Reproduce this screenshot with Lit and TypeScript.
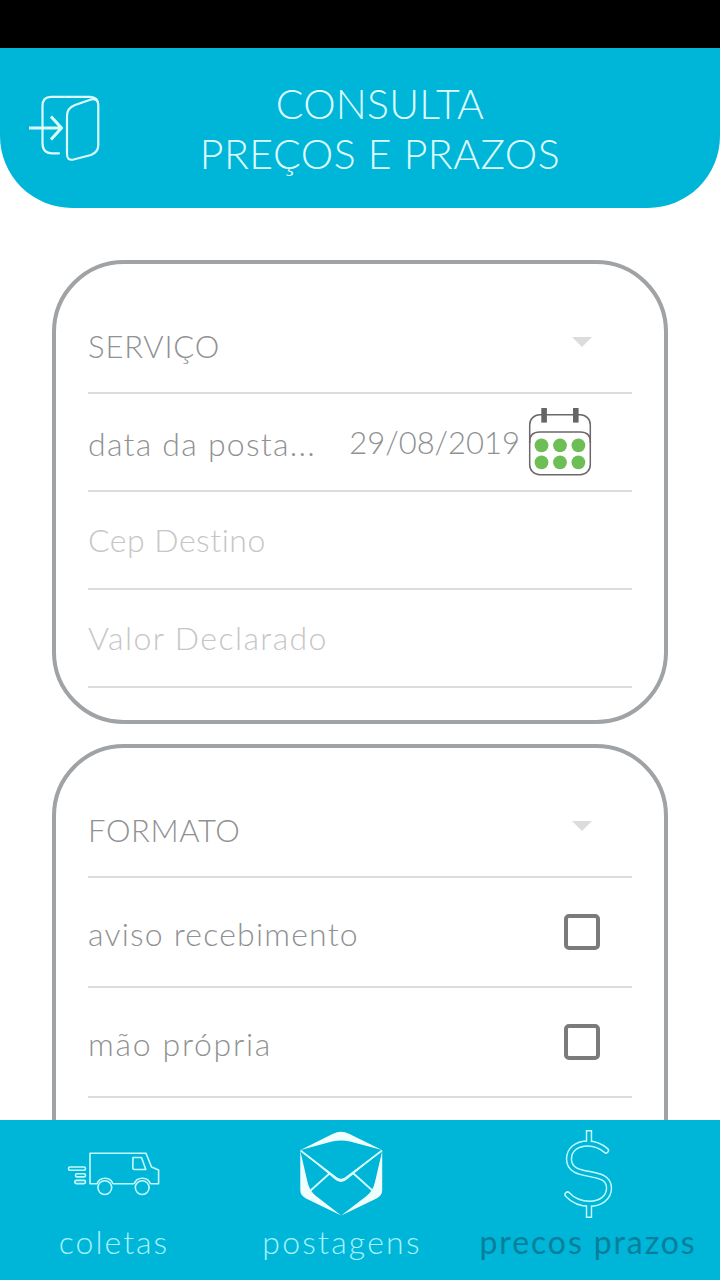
import { LitElement, html, css, svg } from "lit";
import { customElement } from "lit/decorators.js";

const exitIcon = svg`<svg class="exit" width="76" height="72" viewBox="26 92 76 72" fill="none" stroke="#dcfbff" stroke-width="2.2" stroke-linecap="round" stroke-linejoin="round">
  <path d="M59 153.300H52Q42.500 153.300 42.500 143V106Q42.500 96.800 51 96.800H90Q98.300 97 98.300 105V145Q98.300 152 91 155L73.500 159.500Q67 161 67 154V116Q67 108 75 105L91 99.500Q96.500 98 98 103"/>
  <path stroke-width="3" stroke-linecap="butt" d="M29 128H61M51 116.500L61.500 128L51 139.500"/></svg>`;

const calendarIcon = svg`<svg class="calendar" width="64" height="70" viewBox="528 407 64 70">
  <g fill="none" stroke="#6d666b" stroke-width="1.500">
    <rect x="529.700" y="414.700" width="60.600" height="60" rx="10"/>
    <path d="M529.700 443V441.500Q529.700 432 539.700 432H580.300Q590.300 432 590.300 441.500V443"/></g>
  <g fill="#666"><rect x="541.300" y="408" width="5.600" height="14.600"/><rect x="573" y="408" width="5.600" height="14.600"/></g>
  <g fill="#6dbe55"><circle cx="541.500" cy="445.300" r="6.900"/><circle cx="560" cy="445.300" r="6.900"/><circle cx="578.400" cy="445.300" r="6.900"/><circle cx="541.500" cy="462.300" r="6.900"/><circle cx="560" cy="462.300" r="6.900"/><circle cx="578.400" cy="462.300" r="6.900"/></g></svg>`;

const arrow = svg`<svg class="arrow" width="20" height="10" viewBox="0 0 20 10"><path d="M0 0H20L10 10Z" fill="#dcdcdc"/></svg>`;

const vanIcon = svg`<svg width="94" height="92" viewBox="67 1128 94 92" fill="none" stroke="#c4fbff" stroke-width="1.600" stroke-linejoin="round">
  <path d="M97 1183.700H90V1153.300H146L151.500 1167L158.600 1170V1183.700H150.500M134 1183.700H113"/>
  <path d="M133 1157.500H141.500L145.800 1169.500H134.500Q132.800 1169.500 132.800 1167.500Z"/>
  <circle cx="104.800" cy="1187.600" r="6.900"/><circle cx="142.200" cy="1187.600" r="6.900"/>
  <path d="M97 1184Q99 1178.200 105 1178.200T113 1184M134.200 1184Q136 1178.200 142.300 1178.200T150.500 1184"/>
  <rect x="68.500" y="1167" width="17" height="3.200" rx="1.500"/><rect x="75.500" y="1173.700" width="10" height="3.200" rx="1.500"/><rect x="74.800" y="1180.400" width="10.700" height="3.200" rx="1.500"/></svg>`;

const envelopeIcon = svg`<svg width="84" height="92" viewBox="300 1128 84 92" fill="#f0feff">
  <path d="M300.500 1150L333 1133.700Q341 1129.800 349 1133.700L382 1150L350 1141.500Q341 1139.300 332 1141.500Z"/>
  <path d="M300.300 1151L307.500 1182Q309.500 1191 316 1196L341.200 1215.500L306 1198.500Q300.300 1195.500 300.300 1190Z"/>
  <path d="M382.200 1151L375 1182Q373 1191 366.500 1196L341.200 1215.500L376.500 1198.500Q382.200 1195.500 382.200 1190Z"/>
  <path d="M300.300 1150L335 1176Q341 1182 347 1176L382.200 1150L347.500 1179Q341 1185 334.500 1179Z"/>
  <path d="M300.500 1150.500L336 1178Q341 1182 346 1178L382 1150.500M329.500 1173.500L309.500 1191.500M353.500 1173.500L373.500 1191.500" fill="none" stroke="#d8fcff" stroke-width="1.700"/></svg>`;

const dollarIcon = svg`<svg width="52" height="92" viewBox="562 1128 52 92" fill="none" stroke-linecap="round">
  <g stroke="#c4fbff" stroke-width="6.400"><path d="M589 1130V1144M589 1204V1218" stroke-linecap="butt"/>
  <path d="M606 1150.500C600 1145.500 594 1143.500 588 1143.500C576 1143.500 569 1150 569 1159C569 1181 609 1167 609 1188C609 1198 600 1203.800 590 1203.800C580 1203.800 573 1200.500 567.500 1194.500"/></g>
  <path stroke="#00b6d8" stroke-width="3.500" stroke-linecap="butt" d="M589 1131.400V1144M589 1204V1216.600"/>
  <path stroke="#00b6d8" stroke-width="3.500" d="M606 1150.500C600 1145.500 594 1143.500 588 1143.500C576 1143.500 569 1150 569 1159C569 1181 609 1167 609 1188C609 1198 600 1203.800 590 1203.800C580 1203.800 573 1200.500 567.500 1194.500"/></svg>`;

@customElement("app-root")
class AppRoot extends LitElement {
  static styles = css`
    :host { display: flex; flex-direction: column; height: 1280px; width: 720px; overflow: hidden; background: #fff;
      font-family: Lato, "Noto Sans", sans-serif; font-weight: 300; font-size: 32px; color: #8f9193; }
    * { box-sizing: border-box; }
    svg { display: block; flex: none; }
    span, h1 { white-space: nowrap; }
    .status { height: 48px; flex: none; background: #000; }
    header { height: 160px; flex: none; background: #00b6d8; border-radius: 0 0 72px 72px; display: flex; padding-left: 26px; color: #dffcff; }
    .exit { margin-top: 44px; }
    h1 { margin: 31px 0 0 58px; width: 440px; text-align: center; font-size: 41px; line-height: 50px; font-weight: 300; }
    h1 div { width: max-content; margin: 0 auto; }
    .t1 { letter-spacing: 0.2px; }
    .t2 { letter-spacing: 0.5px; }
    main { flex: 1; min-height: 0; overflow: hidden; padding: 52px 52px 0; display: flex; flex-direction: column; gap: 20px; }
    .card { border: 4px solid #a0a3a6; border-radius: 72px; padding: 32px; flex: none; }
    .row { height: 98px; border-bottom: 2px solid #dcdcdc; display: flex; align-items: center; line-height: 40px; padding-top: 4px; }
    .row.tall { height: 110px; }
    .grow { flex: 1; }
    .arrow { margin: -9px 40px 0 0; }
    .hint { color: #c6c6c7; margin-top: -4px; }
    .date { margin-top: -5px; margin-right: 8px; font-size: 31px; }
    .calendar { margin: -5px 40px 0 0; }
    .box { width: 36px; height: 36px; margin: -5px 32px 0 0; border: 4px solid #7b7b7b; border-radius: 5px; }
    .l1 { font-size: 31px; letter-spacing: 0.8px; }
    .l2 { letter-spacing: 1.25px; }
    .l3 { letter-spacing: 0.5px; }
    .l4 { letter-spacing: 1.4px; }
    .l5 { font-size: 31px; letter-spacing: 0.6px; }
    .l6 { letter-spacing: 1.2px; }
    .l7 { letter-spacing: 1.7px; }
    nav { height: 160px; flex: none; background: #00b6d8; display: grid; grid-template-columns: 228px 228px 264px; color: #a5f2fb; }
    .tab { display: flex; flex-direction: column; align-items: center; padding-top: 8px; gap: 2px; line-height: 40px; }
    .n1 { letter-spacing: 2px; }
    .n2 { letter-spacing: 2.2px; }
    .n3 { letter-spacing: 1.9px; }
    .active { color: #087f9a; font-weight: 400; }
  `;
  render() {
    return html`
      <div class="status"></div>
      <header>${exitIcon}<h1><div class="t1">CONSULTA</div><div class="t2">PREÇOS E PRAZOS</div></h1></header>
      <main>
        <section class="card">
          <div class="row"><span class="l1">SERVIÇO</span><i class="grow"></i>${arrow}</div>
          <div class="row"><span class="l2">data da posta...</span><i class="grow"></i><span class="date">29/08/2019</span>${calendarIcon}</div>
          <div class="row"><span class="hint l3">Cep Destino</span></div>
          <div class="row"><span class="hint l4">Valor Declarado</span></div>
        </section>
        <section class="card">
          <div class="row"><span class="l5">FORMATO</span><i class="grow"></i>${arrow}</div>
          <div class="row tall"><span class="l6">aviso recebimento</span><i class="grow"></i><div class="box"></div></div>
          <div class="row tall"><span class="l7">mão própria</span><i class="grow"></i><div class="box"></div></div>
          <div class="row tall"></div>
        </section>
      </main>
      <nav>
        <div class="tab">${vanIcon}<span class="n1">coletas</span></div>
        <div class="tab">${envelopeIcon}<span class="n2">postagens</span></div>
        <div class="tab active">${dollarIcon}<span class="n3">precos prazos</span></div>
      </nav>`;
  }
}
